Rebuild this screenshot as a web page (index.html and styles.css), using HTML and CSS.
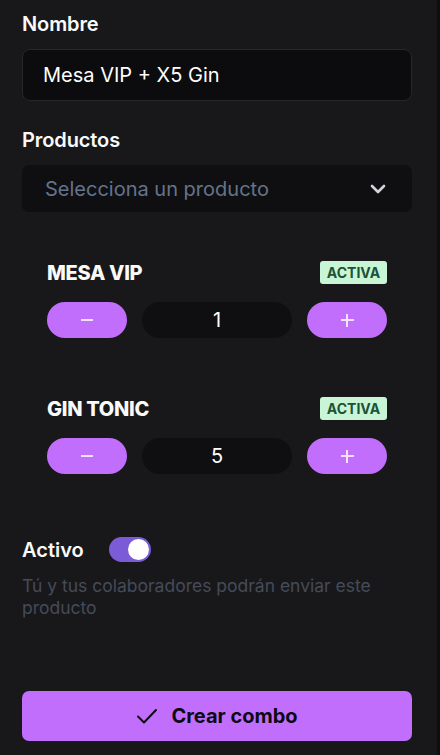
FILE: index.html
```html
<!DOCTYPE html>
<html lang="es">
<head>
<meta charset="utf-8">
<link rel="stylesheet" href="styles.css">
</head>
<body>
<div class="page">
  <main class="form">
    <label class="label label-first">Nombre</label>
    <div class="input">Mesa VIP + X5 Gin</div>

    <label class="label label-products">Productos</label>
    <div class="select">
      <span class="placeholder">Selecciona un producto</span>
      <svg class="chev" width="16" height="10" viewBox="0 0 16 10"><path d="M2 2l6 6 6-6" fill="none" stroke="#d4d4d8" stroke-width="2.6" stroke-linecap="round" stroke-linejoin="round"/></svg>
    </div>

    <section class="product first-product">
      <div class="product-head">
        <span class="product-name">MESA VIP</span>
        <span class="badge">ACTIVA</span>
      </div>
      <div class="counter">
        <button class="step"><span class="minus"></span></button>
        <div class="count">1</div>
        <button class="step"><span class="plus"></span></button>
      </div>
    </section>

    <section class="product second-product">
      <div class="product-head">
        <span class="product-name">GIN TONIC</span>
        <span class="badge">ACTIVA</span>
      </div>
      <div class="counter">
        <button class="step"><span class="minus"></span></button>
        <div class="count">5</div>
        <button class="step"><span class="plus"></span></button>
      </div>
    </section>

    <div class="active-row">
      <span class="active-label">Activo</span>
      <span class="toggle"><span class="knob"></span></span>
    </div>
    <p class="help">Tú y tus colaboradores podrán enviar este producto</p>

    <button class="submit">
      <svg width="22" height="16" viewBox="0 0 22 16"><path d="M2 8.5l6 6L20 2" fill="none" stroke="#0c0a14" stroke-width="2" stroke-linecap="round" stroke-linejoin="round"/></svg>
      <span>Crear combo</span>
    </button>
  </main>
  <div class="scrollbar"></div>
</div>
</body>
</html>
```
FILE: styles.css
```css
* { box-sizing: border-box; }
html, body { margin: 0; padding: 0; }
body {
  background: #18181b;
  font-family: Inter, "Noto Sans", sans-serif;
  color: #fafafa;
  width: 440px;
  height: 755px;
  overflow: hidden;
}
.page {
  display: flex;
  height: 755px;
}
.form {
  width: 437px;
  padding: 12px 25px 0 22px;
  display: flex;
  flex-direction: column;
}
.scrollbar {
  width: 3px;
  background: #0e0e10;
}
.label {
  display: block;
  font-size: 20px;
  font-weight: 600;
  line-height: 24px;
  height: 24px;
  letter-spacing: -0.1px;
}
.label-first { margin-bottom: 13px; }
.input {
  height: 52px;
  border: 1px solid #27272a;
  border-radius: 8px;
  background: #0c0c0e;
  padding: 0 20px;
  display: flex;
  align-items: center;
  font-size: 20px;
  color: #ffffff;
}
.label-products { margin-top: 27px; margin-bottom: 13px; }
.select {
  height: 47px;
  border-radius: 7px;
  background: #0f0f11;
  padding: 0 26px 0 23px;
  display: flex;
  align-items: center;
  justify-content: space-between;
}
.placeholder {
  font-size: 20px;
  color: #64748b;
}
.product {
  padding: 0 25px;
}
.first-product { margin-top: 49px; }
.second-product { margin-top: 59px; }
.product-head {
  height: 23px;
  display: flex;
  align-items: center;
  justify-content: space-between;
}
.product-name {
  font-size: 20px;
  font-weight: 800;
  letter-spacing: -0.3px;
}
.badge {
  height: 23px;
  width: 67px;
  border-radius: 3px;
  background: #c7f5d6;
  color: #1c5236;
  font-size: 14px;
  font-weight: 700;
  display: flex;
  align-items: center;
  justify-content: center;
}
.counter {
  margin-top: 18px;
  height: 36px;
  display: grid;
  grid-template-columns: 80px 150px 80px;
  justify-content: space-between;
}
.step {
  border: 0;
  padding: 0;
  border-radius: 18px;
  background: #c26efc;
  display: flex;
  align-items: center;
  justify-content: center;
}
.minus {
  width: 12px;
  height: 2px;
  background: #f3e3ff;
}
.plus {
  width: 13px;
  height: 13px;
  position: relative;
}
.plus::before, .plus::after {
  content: "";
  position: absolute;
  background: #f3e3ff;
}
.plus::before { left: 0; top: 5.5px; width: 13px; height: 2px; }
.plus::after { top: 0; left: 5.5px; width: 2px; height: 13px; }
.count {
  border-radius: 18px;
  background: #0f0f11;
  display: flex;
  align-items: center;
  justify-content: center;
  font-size: 20px;
  color: #ffffff;
}
.active-row {
  margin-top: 63px;
  display: flex;
  align-items: center;
  gap: 25px;
  height: 25px;
}
.active-label {
  font-size: 20px;
  font-weight: 600;
}
.toggle {
  width: 42px;
  height: 25px;
  border-radius: 13px;
  background: #7b5bd6;
  display: flex;
  align-items: center;
  justify-content: flex-end;
  padding: 0 2px;
}
.knob {
  width: 21px;
  height: 21px;
  border-radius: 50%;
  background: #ffffff;
}
.help {
  margin: 13px 0 0;
  font-size: 17.5px;
  line-height: 22px;
  color: #454b57;
  width: 390px;
  padding-right: 10px;
}
.submit {
  margin-top: 72px;
  height: 50px;
  width: 390px;
  border: 0;
  border-radius: 7px;
  background: #c26efc;
  display: flex;
  align-items: center;
  justify-content: center;
  gap: 13px;
  font-family: Inter, "Noto Sans", sans-serif;
  font-size: 20px;
  font-weight: 700;
  color: #0c0a14;
}
```
